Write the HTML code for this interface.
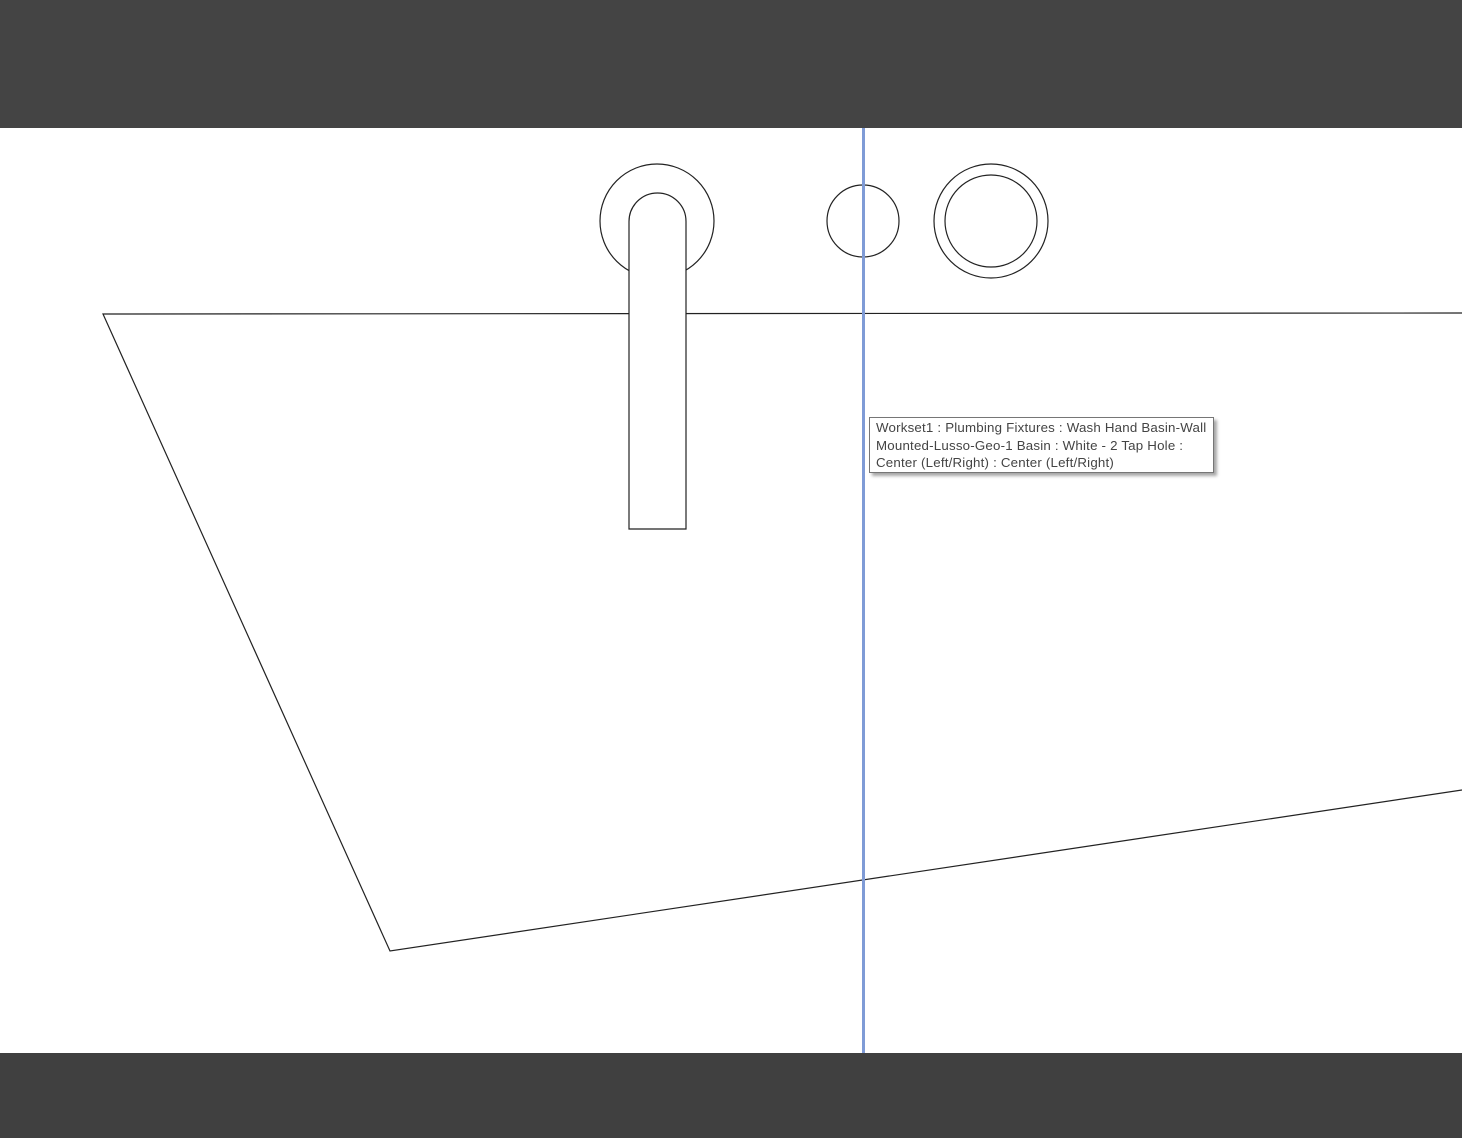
<!DOCTYPE html>
<html><head><style>
body{margin:0;width:1462px;height:1138px;overflow:hidden;background:#fff;position:relative}
.tip{position:absolute;left:869px;top:417px;width:345px;height:56px;border:1px solid #767676;background:#fff;box-shadow:3px 3px 3px rgba(0,0,0,0.35);font-family:"Liberation Sans",sans-serif;font-size:13.3px;line-height:17.5px;color:#444;padding:1px 0 0 6px;box-sizing:border-box;white-space:nowrap;letter-spacing:0.2px}
</style></head><body>
<svg width="1462" height="1138" style="position:absolute;left:0;top:0">
<rect x="0" y="0" width="1462" height="128" fill="#444"/>
<rect x="0" y="1053" width="1462" height="85" fill="#404040"/>
<g fill="none" stroke="#222" stroke-width="1.2">
<polyline points="1462,313 103,314 390,951 1462,790"/>
<circle cx="657" cy="221" r="57"/>
<path d="M629,529 L629,221.5 A28.5,28.5 0 0 1 686,221.5 L686,529 Z" fill="#fff"/>
<circle cx="863" cy="221" r="36"/>
<circle cx="991" cy="221" r="57"/>
<circle cx="991" cy="221" r="46"/>
</g>
<rect x="862" y="128" width="3" height="925" fill="#7f9bd6"/>
</svg>
<div class="tip">Workset1 : Plumbing Fixtures : Wash Hand Basin-Wall<br>Mounted-Lusso-Geo-1 Basin : White - 2 Tap Hole :<br>Center (Left/Right) : Center (Left/Right)</div>
</body></html>
